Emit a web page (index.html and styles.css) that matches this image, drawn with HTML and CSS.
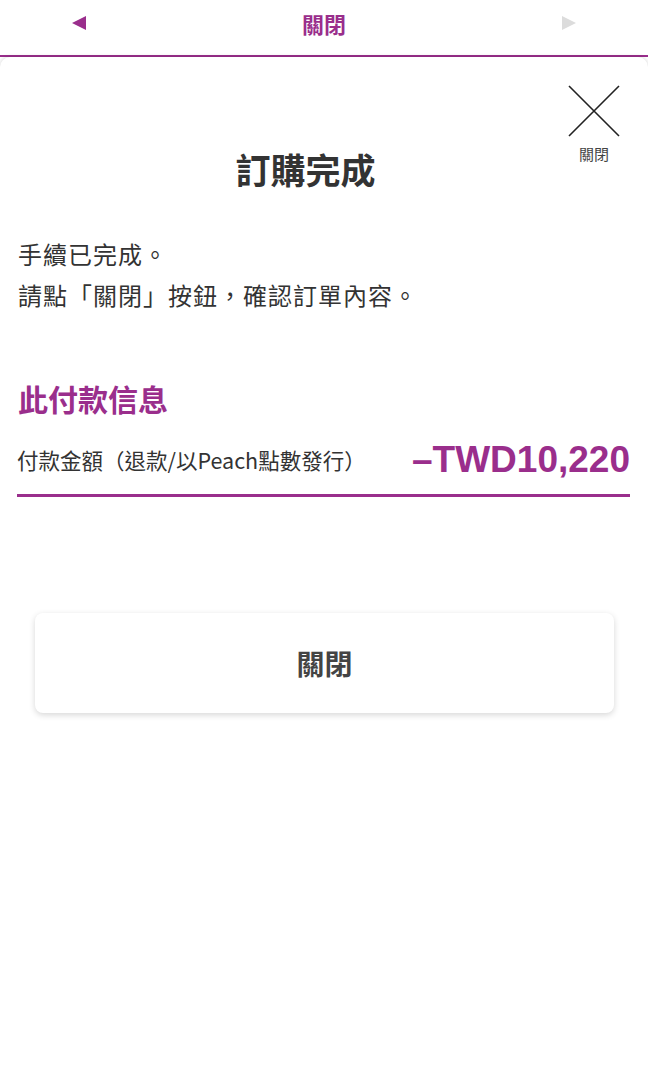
FILE: index.html
```html
<!DOCTYPE html>
<html lang="zh-Hant">
<head>
<meta charset="utf-8">
<title>訂購完成</title>
<link rel="stylesheet" href="styles.css">
</head>
<body>
<header class="topbar">
  <span class="tri tri-left"></span>
  <span class="topbar-title">關閉</span>
  <span class="tri tri-right"></span>
</header>
<main class="panel">
  <div class="close-wrap">
    <button class="close-btn" type="button">
      <svg class="close-icon" width="52" height="52" viewBox="0 0 52 52"><path d="M1 1 L51 51 M51 1 L1 51" stroke="#222" stroke-width="1.6" fill="none"/></svg>
      <span class="close-label">關閉</span>
    </button>
  </div>
  <h1 class="title">訂購完成</h1>
  <p class="msg">手續已完成。<br>請點「關閉」按鈕，確認訂單內容。</p>
  <h2 class="section">此付款信息</h2>
  <div class="pay-row">
    <span class="pay-label">付款金額（退款/以Peach點數發行）</span>
    <span class="pay-amount">–TWD10,220</span>
  </div>
  <div class="btn-wrap">
    <button class="main-btn" type="button">關閉</button>
  </div>
</main>
</body>
</html>
```
FILE: styles.css
```css
* { box-sizing: border-box; }
html, body { margin: 0; padding: 0; background: #fff; }
body {
  font-family: "Noto Sans CJK TC", "Noto Sans", sans-serif;
  color: #333;
  width: 648px;
}
.topbar {
  height: 57px;
  border-bottom: 2px solid #9a2e8c;
  display: flex;
  align-items: center;
  justify-content: space-between;
  padding: 0 72px 10px 72px;
}
.tri {
  width: 0; height: 0;
  border-top: 7px solid transparent;
  border-bottom: 7px solid transparent;
}
.tri-left { border-right: 14px solid #9a2e8c; }
.tri-right { border-left: 14px solid #dcdcdc; }
.topbar-title {
  font-size: 22px;
  font-weight: 700;
  color: #9a2e8c;
  line-height: 1;
  margin-left: 0;
}
.panel {
  border-radius: 10px 10px 0 0;
  box-shadow: 0 0 4px rgba(0,0,0,0.18);
  min-height: 1023px;
  padding: 0 17px 0 18px;
}
.close-wrap {
  display: flex;
  justify-content: flex-end;
  padding-top: 28px;
  margin-right: 11px;
}
.close-btn {
  background: none;
  border: 0;
  padding: 0;
  display: flex;
  flex-direction: column;
  align-items: center;
  cursor: pointer;
}
.close-icon { display: block; }
.close-label {
  font-family: "Noto Sans CJK TC", sans-serif;
  font-size: 15px;
  color: #444;
  line-height: 18px;
  margin-top: 8px;
}
.title {
  margin: -16px 0 0 0;
  text-align: center;
  font-size: 35px;
  font-weight: 700;
  line-height: 44px;
  color: #333;
  padding-right: 38px;
}
.msg {
  margin: 42px 0 0 0;
  font-size: 24px;
  line-height: 41px;
  letter-spacing: 1px;
  color: #333;
}
.section {
  margin: 63px 0 0 0;
  font-size: 30px;
  font-weight: 700;
  line-height: 40px;
  color: #9a2e8c;
}
.pay-row {
  display: flex;
  justify-content: space-between;
  align-items: center;
  margin-top: 22px;
  padding-bottom: 14px;
  border-bottom: 3px solid #9a2e8c;
  margin-left: -1px;
  margin-right: 1px;
}
.pay-label {
  font-size: 21.5px;
  line-height: 30px;
  color: #333;
}
.pay-amount {
  font-family: "Liberation Sans", Arial, sans-serif;
  font-size: 37px;
  font-weight: 700;
  color: #9a2e8c;
  line-height: 40px;
}
.btn-wrap {
  padding: 116px 17px 0 17px;
}
.main-btn {
  display: block;
  width: 100%;
  height: 100px;
  background: #fff;
  border: 0;
  border-radius: 8px;
  box-shadow: 0 2px 6px rgba(0,0,0,0.16);
  font-family: "Noto Sans CJK TC", sans-serif;
  font-size: 28px;
  font-weight: 700;
  color: #444;
  cursor: pointer;
}
```
